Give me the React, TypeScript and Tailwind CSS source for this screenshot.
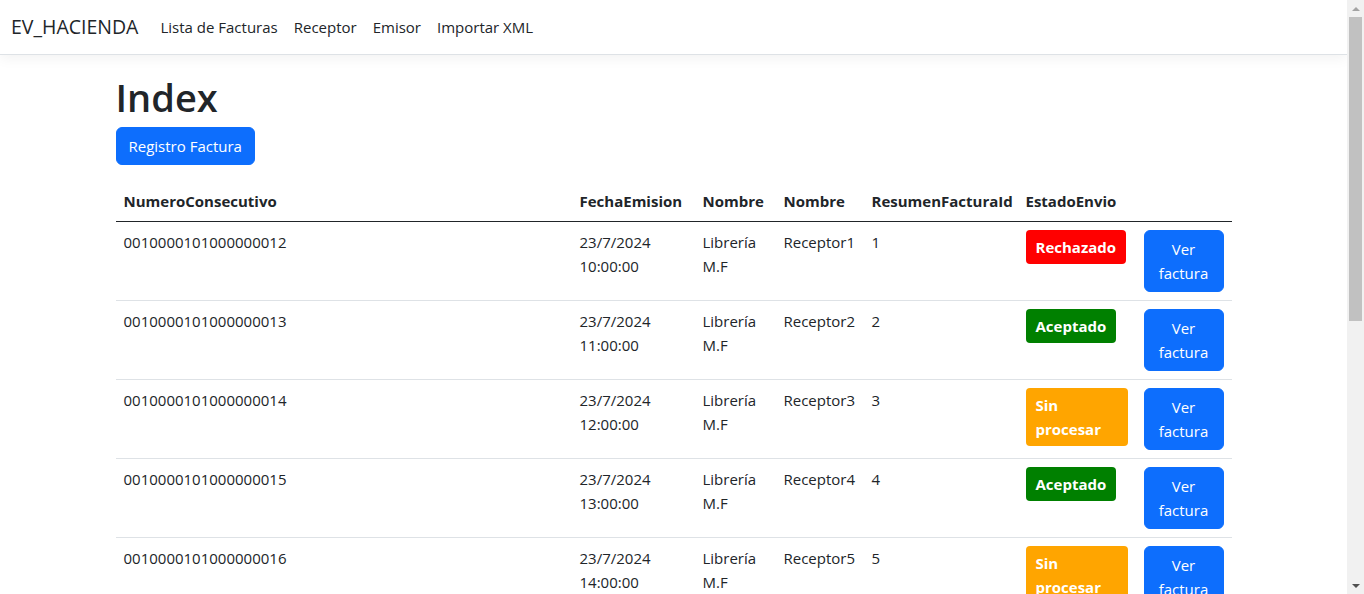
import React from 'react';

interface Factura {
  numero: string;
  fecha: string;
  hora: string;
  emisor: string;
  receptor: string;
  resumenId: number;
  estado: 'Rechazado' | 'Aceptado' | 'Sin procesar';
}

const facturas: Factura[] = [
  { numero: '0010000101000000012', fecha: '23/7/2024', hora: '10:00:00', emisor: 'Librería M.F', receptor: 'Receptor1', resumenId: 1, estado: 'Rechazado' },
  { numero: '0010000101000000013', fecha: '23/7/2024', hora: '11:00:00', emisor: 'Librería M.F', receptor: 'Receptor2', resumenId: 2, estado: 'Aceptado' },
  { numero: '0010000101000000014', fecha: '23/7/2024', hora: '12:00:00', emisor: 'Librería M.F', receptor: 'Receptor3', resumenId: 3, estado: 'Sin procesar' },
  { numero: '0010000101000000015', fecha: '23/7/2024', hora: '13:00:00', emisor: 'Librería M.F', receptor: 'Receptor4', resumenId: 4, estado: 'Aceptado' },
  { numero: '0010000101000000016', fecha: '23/7/2024', hora: '14:00:00', emisor: 'Librería M.F', receptor: 'Receptor5', resumenId: 5, estado: 'Sin procesar' },
];

const estadoClass: Record<Factura['estado'], string> = {
  Rechazado: 'bg-[#ff0000]',
  Aceptado: 'bg-[#008000]',
  'Sin procesar': 'bg-[#ffa500]',
};

const Navbar: React.FC = () => (
  <header className="flex h-[55px] items-center border-b border-[#dee2e6] bg-white pl-[11px] pr-3 shadow-[0_4px_12px_rgba(0,0,0,0.05)]">
    <span className="mr-[14px] text-[19.5px] leading-[30px] text-[#212529]">EV_HACIENDA</span>
    <nav className="flex">
      {['Lista de Facturas', 'Receptor', 'Emisor', 'Importar XML'].map((item) => (
        <a key={item} className="px-2 text-[#212529]">{item}</a>
      ))}
    </nav>
  </header>
);

const Scrollbar: React.FC = () => (
  <div className="flex w-[17px] shrink-0 flex-col items-center bg-[#f1f1f1]">
    <div className="flex h-[17px] items-center justify-center">
      <div className="h-0 w-0 border-x-[4px] border-b-[4px] border-x-transparent border-b-[#a3a3a3]" />
    </div>
    <div className="h-[304px] w-[13px] bg-[#c1c1c1]" />
    <div className="flex-1" />
    <div className="flex h-[17px] items-center justify-center">
      <div className="h-0 w-0 border-x-[4px] border-t-[4px] border-x-transparent border-t-[#505050]" />
    </div>
  </div>
);

export default function App() {
  return (
    <div className="flex h-[594px] overflow-hidden bg-white font-['Open_Sans',sans-serif] text-[15px] leading-6 text-[#212529]">
      <div className="min-w-0 flex-1 overflow-hidden">
        <Navbar />
        <main className="mx-auto w-[1140px] px-3 pt-[18px]">
          <h1 className="mb-[6px] text-[38px] font-semibold leading-[48px]">Index</h1>
          <p className="mb-4">
            <button className="rounded-md border border-[#0d6efd] bg-[#0d6efd] px-3 py-[6px] text-white">Registro Factura</button>
          </p>
          <table className="w-full table-fixed border-collapse text-left">
            <colgroup>
              <col className="w-[456px]" />
              <col className="w-[123px]" />
              <col className="w-[81px]" />
              <col className="w-[88px]" />
              <col className="w-[154px]" />
              <col className="w-[118px]" />
              <col className="w-[96px]" />
            </colgroup>
            <thead>
              <tr className="border-b border-[#212529]">
                <th className="p-2 font-bold">NumeroConsecutivo</th>
                <th className="p-2 font-bold">FechaEmision</th>
                <th className="p-2 font-bold">Nombre</th>
                <th className="p-2 font-bold">Nombre</th>
                <th className="p-2 font-bold">ResumenFacturaId</th>
                <th className="p-2 font-bold">EstadoEnvio</th>
                <th className="p-2"></th>
              </tr>
            </thead>
            <tbody>
              {facturas.map((f) => (
                <tr key={f.numero} className="border-b border-[#dee2e6] align-top">
                  <td className="p-2">{f.numero}</td>
                  <td className="p-2">{f.fecha} {f.hora}</td>
                  <td className="p-2">{f.emisor}</td>
                  <td className="p-2">{f.receptor}</td>
                  <td className="p-2">{f.resumenId}</td>
                  <td className="p-2">
                    <span className={`inline-block rounded-[4px] px-[10px] py-[5px] font-bold text-white ${estadoClass[f.estado]}`}>
                      {f.estado}
                    </span>
                  </td>
                  <td className="p-2">
                    <button className="w-full rounded-md border border-[#0d6efd] bg-[#0d6efd] px-3 py-[6px] text-white">Ver factura</button>
                  </td>
                </tr>
              ))}
            </tbody>
          </table>
        </main>
      </div>
      <Scrollbar />
    </div>
  );
}
